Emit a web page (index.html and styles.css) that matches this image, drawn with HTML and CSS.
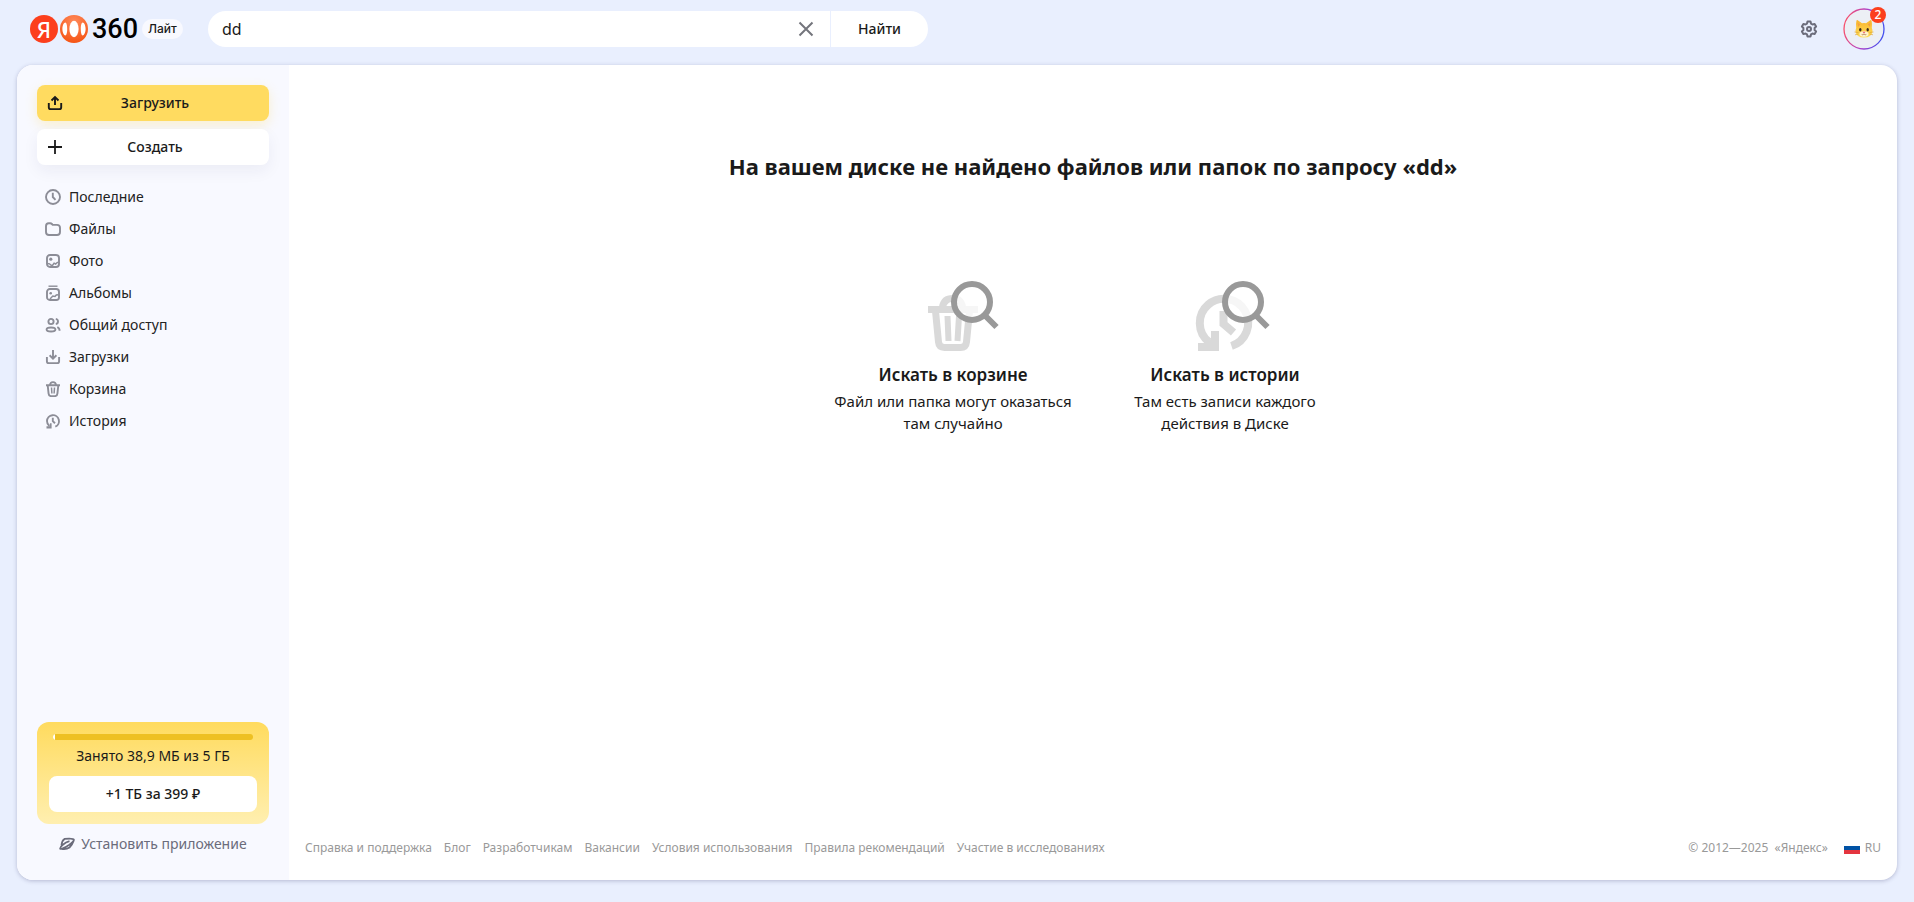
FILE: index.html
```html
<!DOCTYPE html>
<html lang="ru">
<head>
<meta charset="utf-8">
<meta name="viewport" content="width=device-width, initial-scale=1">
<title>Яндекс Диск</title>
<link rel="stylesheet" href="styles.css">
</head>
<body>
<header class="header">
  <a class="logo" href="#" aria-label="Яндекс 360">
    <span class="logo-ya">Я</span>
    <svg class="logo-globe" width="28" height="28" viewBox="0 0 28 28" aria-hidden="true">
      <defs><radialGradient id="globe" cx=".5" cy=".25" r=".8"><stop offset="0" stop-color="#ff8a5c"/><stop offset="1" stop-color="#f5500f"/></radialGradient></defs>
      <circle cx="14" cy="14" r="14" fill="url(#globe)"/>
      <ellipse cx="14" cy="14" rx="4.600" ry="8.200" fill="#fff"/>
      <path d="M5.300 7.600c1.300 0 1.900 3 1.900 6.400s-.6 6.400-1.900 6.400c-1.300 0-2.900-2.800-2.900-6.400s1.600-6.400 2.900-6.400zM22.700 7.600c-1.300 0-1.900 3-1.900 6.400s.6 6.400 1.900 6.400c1.300 0 2.900-2.800 2.900-6.400s-1.600-6.400-2.900-6.400z" fill="#fff"/>
    </svg>
    <span class="logo-num">360</span>
    <span class="logo-tag">Лайт</span>
  </a>
  <form class="search" role="search">
    <input class="search-input" type="text" value="dd" aria-label="Поиск">
    <button class="search-clear" type="reset" aria-label="Очистить">
      <svg width="16" height="16" viewBox="0 0 16 16"><path d="M1.500 1.500l13 13M14.500 1.500l-13 13" stroke="#74757c" stroke-width="2"/></svg>
    </button>
    <button class="search-submit" type="button">Найти</button>
  </form>
  <div class="tools">
    <button class="gear" type="button" aria-label="Настройки">
      <svg width="18" height="18" viewBox="0 0 18 18" fill="none" stroke="#6b6c7b" stroke-width="2" stroke-linejoin="round"><path d="M7.500 1.500h3l.5 2.100 1.500.9 2.100-.6 1.500 2.600-1.500 1.500v2l1.500 1.500-1.500 2.600-2.100-.6-1.500.9-.5 2.100h-3L7 14.400l-1.500-.9-2.100.6-1.500-2.600L3.400 10V8L1.900 6.500l1.500-2.600 2.100.6L7 3.600z"/><circle cx="9" cy="9" r="2"/></svg>
    </button>
    <button class="avatar" type="button" aria-label="Профиль">
      <svg width="42" height="42" viewBox="0 0 42 42" aria-hidden="true">
        <defs>
          <linearGradient id="ring" x1="0" y1=".4" x2="1" y2=".6"><stop offset="0" stop-color="#f8506a"/><stop offset=".5" stop-color="#b041c8"/><stop offset="1" stop-color="#4050f0"/></linearGradient>
          <linearGradient id="fur" x1="0" y1="0" x2="0" y2="1"><stop offset="0" stop-color="#f9b52c"/><stop offset="1" stop-color="#ffdf5c"/></linearGradient>
        </defs>
        <circle cx="21" cy="21" r="20" fill="#eceff5" stroke="url(#ring)" stroke-width="1.300"/>
        <path d="M13.500 12.500q.4-.8 1.200-.2l4.300 3q2-.5 4 0l4.300-3q.8-.6 1.200.2.900 3.500.300 7.500.8 1.500.7 3.500Q28.700 29.500 21 29.500t-8.500-6q-.1-2 .7-3.500-.6-4 .3-7.500z" fill="url(#fur)"/>
        <path d="M14.600 14.500l2.700 2-2.300 2.400zM27.400 14.500l-2.700 2 2.300 2.400z" fill="#f3a043"/>
        <ellipse cx="21" cy="26" rx="4.500" ry="2.800" fill="#fff3cf"/>
        <ellipse cx="17.300" cy="21.800" rx="1.200" ry="1.700" fill="#3b2a1c"/><ellipse cx="24.700" cy="21.800" rx="1.200" ry="1.700" fill="#3b2a1c"/>
        <path d="M19.500 23.800h3L21 25.500z" fill="#e85a71"/>
        <path d="M18.700 26.500q1.300 1 2.300-.6 1 1.600 2.300.6" stroke="#9b6a3c" stroke-width=".7" fill="none"/>
        <path d="M15.500 24.500l-4-.5M15.500 26l-3.500.8M26.500 24.500l4-.5M26.500 26l3.500.8" stroke="#d99a2b" stroke-width=".6"/>
      </svg>
      <span class="badge">2</span>
    </button>
  </div>
</header>

<div class="panel">
  <aside class="sidebar">
    <button class="action action-upload" type="button">
      <svg class="action-icon" width="16" height="16" viewBox="0 0 16 16" fill="none" stroke="#1a1a1a" stroke-width="1.900"><path d="M1.800 8v4.200q0 1.900 1.900 1.900h8.600q1.900 0 1.900-1.900V8M8 10V2.800M4.500 5.500L8 2l3.500 3.500"/></svg>
      <span>Загрузить</span>
    </button>
    <button class="action action-create" type="button">
      <svg class="action-icon" width="16" height="16" viewBox="0 0 16 16" stroke="#1a1a1a" stroke-width="1.800"><path d="M8 1v14M1 8h14"/></svg>
      <span>Создать</span>
    </button>
    <nav class="nav">
      <a class="nav-link" href="#"><svg class="nav-icon" viewBox="0 0 16 16"><circle cx="8" cy="8" r="7"/><path d="M7.800 3.800V8l2.700 2.800"/></svg>Последние</a>
      <a class="nav-link" href="#"><svg class="nav-icon" viewBox="0 0 16 16"><path d="M1 5.200q0-3 2.700-3h1.500q1 0 1.700.8l.8.900h4.300q3 0 3 2.900v4.100q0 3.100-3 3.100H4q-3 0-3-3.100z"/></svg>Файлы</a>
      <a class="nav-link" href="#"><svg class="nav-icon" viewBox="0 0 16 16"><rect x="2" y="2" width="12" height="12" rx="3"/><path d="M2.500 10.500q2.300 0 3.500 1.600l1.200.7 1.900-2.600 1.500.8q1.400-1.900 3.400-2" stroke-width="1.500"/><circle cx="5.800" cy="6.200" r="1.600" fill="#8c8d97" stroke="none"/></svg>Фото</a>
      <a class="nav-link" href="#"><svg class="nav-icon" viewBox="0 0 16 16"><path d="M3.500 1.200h9" stroke-width="1.400"/><rect x="2" y="4" width="12" height="11" rx="2.800"/><path d="M5 14l2.800-3 2.200.5 1.300-1.500 2.200-.2" stroke-width="1.500"/><circle cx="5.700" cy="8.200" r="1.300" fill="#8c8d97" stroke="none"/></svg>Альбомы</a>
      <a class="nav-link" href="#"><svg class="nav-icon" viewBox="0 0 16 16"><circle cx="6" cy="4.500" r="2.600"/><ellipse cx="6" cy="12.500" rx="4.400" ry="2"/><path d="M10.800 1.900q2.200.4 2.200 2.600t-2.200 2.600M12.300 10.200q2.300.9 2.300 3.600"/></svg>Общий доступ</a>
      <a class="nav-link" href="#"><svg class="nav-icon" viewBox="0 0 16 16"><path d="M1.900 8v4.200q0 1.900 1.900 1.900h8.400q1.900 0 1.900-1.900V8M8 1v8M4.600 6.300L8 9.600l3.400-3.300"/></svg>Загрузки</a>
      <a class="nav-link" href="#"><svg class="nav-icon" viewBox="0 0 16 16"><path d="M1 4.200h14M5 4q.2-2.900 3-2.900T11 4M2.700 4.500l.9 8.200q.2 2.400 2.400 2.400h4q2.200 0 2.400-2.400l.9-8.200"/><path d="M6.500 6.500l.4 6M9.500 6.500l-.4 6" stroke-width="1.500"/></svg>Корзина</a>
      <a class="nav-link" href="#"><svg class="nav-icon" viewBox="0 0 16 16"><path d="M4.300 13Q2 11.200 2 8a6 6 0 1 1 8.300 5.700M7.800 4.800v3.400l2.200 2.100"/><path d="M1.500 13.200h3l.5-3h1.600v5.200H1.500z" fill="#8c8d97" stroke="none"/></svg>История</a>
    </nav>
    <section class="storage">
      <div class="storage-bar" role="progressbar" aria-label="Занято" aria-valuenow="1" aria-valuemin="0" aria-valuemax="100"><div class="storage-used"></div></div>
      <p class="storage-text">Занято 38,9 МБ из 5 ГБ</p>
      <button class="storage-buy" type="button">+1 ТБ за 399 ₽</button>
    </section>
    <a class="install" href="#">
      <svg width="16" height="14" viewBox="0 0 16 14" fill="none" stroke="#6b6c7b" stroke-width="1.800" stroke-linejoin="round"><path d="M2.500 8Q3 3.500 5.500 1.900 14.500 1 14.900 2.700 15 4.500 10 8 2.500 12.700 1.200 11.700.8 10.500 3.500 8q3.500-3 7-3.800M2.500 11.900q5 .8 8-1.400 2.500-2 4.300-7"/></svg>
      Установить приложение
    </a>
  </aside>
  <div class="content">
    <main class="main">
      <h1 class="title">На вашем диске не найдено файлов или папок по запросу «dd»</h1>
      <div class="options">
        <a class="option" href="#">
          <svg class="option-icon" width="92" height="72" viewBox="0 0 92 72" fill="none" aria-hidden="true">
            <g stroke="#d9d9d9"><path d="M21 28.500h50" stroke-width="7"/><path d="M35.500 26Q37 17.500 45.500 17.500T55.500 26" stroke-width="7"/><path d="M28.500 30l3 31q.5 5.500 6 5.500h16q5.500 0 6-5.500l3-31" stroke-width="7"/><path d="M40.500 35l1 25M52 35l-1.500 25" stroke-width="6"/></g>
            <path d="M77.500 34l12 12" stroke="#999" stroke-width="6"/><circle cx="65" cy="21" r="18" fill="#fff" fill-opacity=".75" stroke="#999" stroke-width="6"/>
          </svg>
          <h2 class="option-title">Искать в корзине</h2>
          <p class="option-text">Файл или папка могут оказаться там случайно</p>
        </a>
        <a class="option" href="#">
          <svg class="option-icon" width="92" height="72" viewBox="0 0 92 72" fill="none" aria-hidden="true">
            <g stroke="#d9d9d9"><path d="M30 61A24.200 24.200 0 1 1 52.500 65" stroke-width="8"/><path d="M44.500 30v13l10 8.500" stroke-width="8"/></g>
            <path d="M19 62h9l4-4v-8h8v20H19z" fill="#d9d9d9"/>
            <path d="M76.500 34l12 12" stroke="#999" stroke-width="6"/><circle cx="64" cy="21" r="18" fill="#fff" fill-opacity=".75" stroke="#999" stroke-width="6"/>
          </svg>
          <h2 class="option-title">Искать в истории</h2>
          <p class="option-text option-text-narrow">Там есть записи каждого действия в Диске</p>
        </a>
      </div>
    </main>
    <footer class="footer">
      <nav class="footer-links">
        <a href="#">Справка и поддержка</a>
        <a href="#">Блог</a>
        <a href="#">Разработчикам</a>
        <a href="#">Вакансии</a>
        <a href="#">Условия использования</a>
        <a href="#">Правила рекомендаций</a>
        <a href="#">Участие в исследованиях</a>
      </nav>
      <div class="footer-side">
        <span>© 2012—2025&nbsp; «Яндекс»</span>
        <button class="lang" type="button"><span class="flag"></span>RU</button>
      </div>
    </footer>
  </div>
</div>
</body>
</html>
```
FILE: styles.css
```css
* { box-sizing: border-box; }
body {
  margin: 0;
  min-height: 100vh;
  display: flex;
  flex-direction: column;
  background: #e9effe;
  color: #1a1a1a;
  font: 14px/20px "Noto Sans", "Open Sans", sans-serif;
}
h1, h2, p { margin: 0; }
a { color: inherit; text-decoration: none; }
button, input { font: inherit; color: inherit; border: 0; padding: 0; background: none; }
button { cursor: pointer; }
svg { display: block; flex: none; }

.header { display: flex; align-items: center; padding: 11px 29px 18px 30px; }
.logo { display: flex; align-items: center; width: 178px; flex: none; }
.logo-ya {
  width: 28px; height: 28px; margin-right: 2px; border-radius: 50%;
  background: #fc3f1d; color: #fff;
  font-size: 22px; font-weight: 500; line-height: 28px; text-align: center;
}
.logo-num { margin-left: 4px; color: #000; font: 500 27px/36px Roboto, sans-serif; }
.logo-tag {
  margin-left: 4px; padding: 0 6px; border-radius: 10px; background: #f8f9ff;
  font-family: Inter, sans-serif; font-size: 12px; font-weight: 500;
}
.search {
  display: flex; align-items: stretch; flex: 0 1 720px; height: 36px;
  border-radius: 18px; background: #fff; overflow: hidden;
}
.search-input { flex: 1; min-width: 0; padding-left: 14px; font-size: 16px; outline: 0; }
.search-clear { width: 48px; display: grid; place-items: center; }
.search-submit { width: 98px; border-left: 1px solid #e9effe; font-weight: 500; }
.tools { display: flex; align-items: center; gap: 25px; margin-left: auto; height: 36px; }
.avatar { position: relative; }
.badge {
  position: absolute; top: -1px; right: -1px; width: 16px; height: 16px; border-radius: 50%;
  background: #fc3f1d; color: #fff; font-size: 12px; font-weight: 500; line-height: 16px;
}

.panel {
  flex: 1; display: flex; margin: 0 17px 22px; border-radius: 16px; overflow: hidden;
  background: #fff; box-shadow: 0 1px 4px rgba(60, 60, 110, .3);
}
.sidebar { flex: none; width: 272px; display: flex; flex-direction: column; padding: 20px 20px 26px; background: #f8f9ff; }
.action {
  display: grid; grid-template-columns: 36px 1fr 32px; align-items: center;
  height: 36px; margin-bottom: 8px; border-radius: 8px; font-weight: 500;
}
.action-icon { justify-self: center; }
.action-upload { background: #ffdb60; box-shadow: 0 4px 12px rgba(255, 219, 96, .3); }
.action-create { background: #fff; box-shadow: 0 6px 16px rgba(40, 40, 80, .06); }
.nav { display: flex; flex-direction: column; margin-top: 8px; }
.nav-link { display: flex; align-items: center; gap: 8px; height: 32px; padding-left: 8px; color: #222; }
.nav-icon { width: 16px; height: 16px; fill: none; stroke: #8c8d97; stroke-width: 1.9; }
.storage {
  margin-top: auto; padding: 12px; border-radius: 12px; text-align: center;
  background: linear-gradient(#ffdb5e, #ffefb0);
}
.storage-bar { height: 6px; margin: 0 4px; border-radius: 3px; background: #eec022; overflow: hidden; }
.storage-used { width: 2px; height: 6px; background: #fff; }
.storage-text { margin: 6px 0 10px; }
.storage-buy { display: block; width: 100%; height: 36px; border-radius: 8px; background: #fff; font-weight: 500; }
.install { display: flex; align-items: center; justify-content: center; gap: 6px; margin-top: 10px; color: #6b6c7b; }

.content { flex: 1; min-width: 0; display: flex; flex-direction: column; }
.main { flex: 1; padding-top: 85px; text-align: center; }
.title { font-size: 22px; line-height: 32px; font-weight: 700; }
.options { display: flex; justify-content: center; gap: 32px; margin-top: 99px; padding-right: 8px; }
.option { width: 240px; }
.option-icon { margin: 0 auto; }
.option-title { margin-top: 10px; font-size: 17px; line-height: 24px; font-weight: 600; }
.option-text { margin: 3px auto 0; font-size: 15px; line-height: 22px; }
.option-text-narrow { max-width: 200px; }
.footer {
  display: flex; justify-content: space-between; padding: 0 16px 24px;
  color: #999; font-size: 12px; line-height: 16px;
}
.footer-links { display: flex; gap: 12px; }
.footer-side { display: flex; gap: 16px; }
.lang { display: flex; align-items: center; gap: 5px; }
.flag { width: 16px; height: 12px; background: linear-gradient(#fff 4px, #0052a5 4px 8px, #e4353f 8px); }
```
